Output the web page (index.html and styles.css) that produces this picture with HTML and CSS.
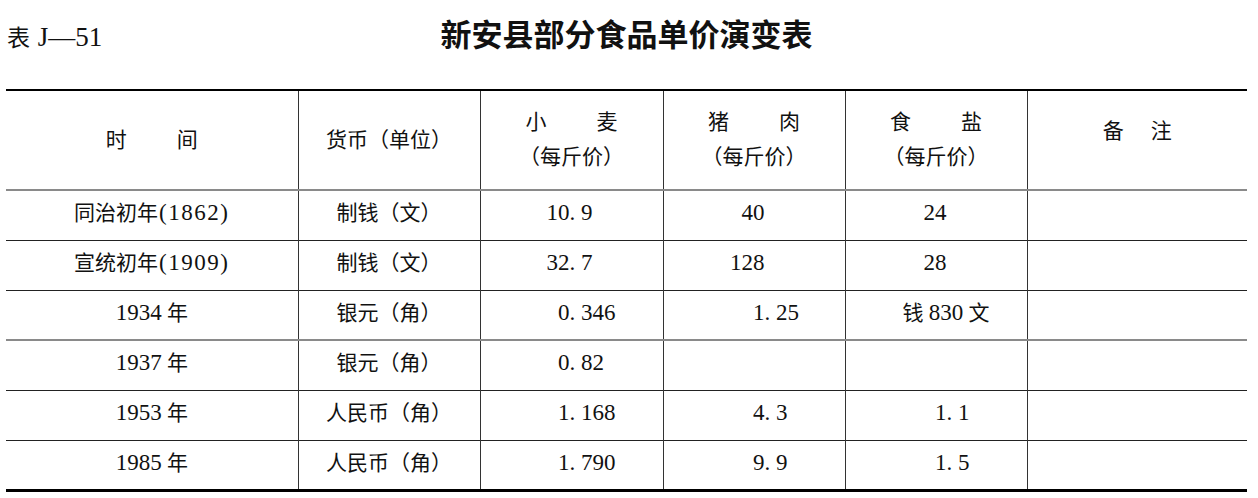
FILE: index.html
```html
<!DOCTYPE html>
<html lang="zh">
<head>
<meta charset="utf-8">
<title>新安县部分食品单价演变表</title>
<link rel="stylesheet" href="styles.css">
</head>
<body>
<div class="page">
  <div class="head">
    <div class="label">表 <span class="lat">J—51</span></div>
    <h1 class="title">新安县部分食品单价演变表</h1>
    <div></div>
  </div>
  <table class="tbl">
    <colgroup>
      <col class="w1"><col class="w2"><col class="w3"><col class="w4"><col class="w5"><col class="w6">
    </colgroup>
    <thead>
      <tr>
        <th><span class="sp50">时间</span></th>
        <th>货币（单位）</th>
        <th><span class="sp50">小麦</span><br>（每斤价）</th>
        <th><span class="sp50">猪肉</span><br>（每斤价）</th>
        <th><span class="sp50">食盐</span><br>（每斤价）</th>
        <th class="note"><span class="sp27">备注</span></th>
      </tr>
    </thead>
    <tbody>
      <tr>
        <td>同治初年<span class="n yr">(1862)</span></td>
        <td>制钱（文）</td>
        <td class="dec d3"><span class="i">10</span>. 9</td>
        <td class="dec d4"><span class="i">40</span></td>
        <td class="dec d5"><span class="i">24</span></td>
        <td></td>
      </tr>
      <tr>
        <td>宣统初年<span class="n yr">(1909)</span></td>
        <td>制钱（文）</td>
        <td class="dec d3"><span class="i">32</span>. 7</td>
        <td class="dec d4"><span class="i">128</span></td>
        <td class="dec d5"><span class="i">28</span></td>
        <td></td>
      </tr>
      <tr class="soft">
        <td><span class="n">1934</span> 年</td>
        <td>银元（角）</td>
        <td class="dec d3"><span class="i">0</span>. 346</td>
        <td class="dec d4"><span class="i">1</span>. 25</td>
        <td class="mix">钱 <span class="n">830</span> 文</td>
        <td></td>
      </tr>
      <tr>
        <td><span class="n">1937</span> 年</td>
        <td>银元（角）</td>
        <td class="dec d3"><span class="i">0</span>. 82</td>
        <td></td>
        <td></td>
        <td></td>
      </tr>
      <tr>
        <td><span class="n">1953</span> 年</td>
        <td>人民币（角）</td>
        <td class="dec d3"><span class="i">1</span>. 168</td>
        <td class="dec d4"><span class="i">4</span>. 3</td>
        <td class="dec d5"><span class="i">1</span>. 1</td>
        <td></td>
      </tr>
      <tr class="last">
        <td><span class="n">1985</span> 年</td>
        <td>人民币（角）</td>
        <td class="dec d3"><span class="i">1</span>. 790</td>
        <td class="dec d4"><span class="i">9</span>. 9</td>
        <td class="dec d5"><span class="i">1</span>. 5</td>
        <td></td>
      </tr>
    </tbody>
  </table>
</div>
</body>
</html>
```

FILE: styles.css
```css
html, body {
  margin: 0;
  padding: 0;
  background: #ffffff;
}

body {
  font-family: "Liberation Serif", "Noto Sans CJK SC", serif;
  color: #111111;
}

.page {
  width: 1241px;
  padding-left: 6px;
}

.head {
  display: grid;
  grid-template-columns: 1fr auto 1fr;
  align-items: baseline;
  padding-top: 17px;
  height: 72px;
}

.label {
  font-size: 23px;
  line-height: 31px;
  padding-left: 1px;
  word-spacing: 2px;
}

.label .lat {
  font-size: 27px;
}

.title {
  margin: 0;
  font-family: "Noto Sans CJK SC", sans-serif;
  font-weight: 700;
  font-size: 31px;
  line-height: 31px;
  color: #111111;
}

.tbl {
  width: 1241px;
  table-layout: fixed;
  border-collapse: collapse;
  border-top: 2px solid #000000;
  border-bottom: 3px solid #000000;
  font-size: 21px;
}

.w1 { width: 292px; }
.w2 { width: 182px; }
.w3 { width: 183px; }
.w4 { width: 182px; }
.w5 { width: 182px; }
.w6 { width: 220px; }

.tbl th,
.tbl td {
  border-left: 1px solid #333333;
  padding: 0;
  text-align: center;
  vertical-align: middle;
  white-space: nowrap;
}

.tbl th:first-child,
.tbl td:first-child {
  border-left: none;
}

.tbl thead tr {
  height: 100px;
  border-bottom: 2px solid #8a8a8a;
}

.tbl th {
  font-weight: 400;
  line-height: 35px;
}

.tbl th.note {
  padding-bottom: 18px;
}

.sp50 {
  letter-spacing: 50px;
  margin-right: -50px;
}

.sp27 {
  letter-spacing: 27px;
  margin-right: -27px;
}

.tbl tbody tr {
  height: 50px;
  border-bottom: 1px solid #222222;
}

.tbl tbody tr.soft {
  border-bottom: 2px solid #8a8a8a;
}

.tbl tbody tr.last {
  border-bottom: 3px solid #000000;
}

.tbl td {
  line-height: 30px;
  padding-bottom: 4px;
}

.n {
  font-size: 23px;
}

.yr {
  letter-spacing: 1.5px;
  padding-left: 1px;
}

.tbl td.dec {
  text-align: left;
  font-size: 23px;
}

.dec .i {
  display: inline-block;
  text-align: right;
}

.d3 .i { width: 89px; }
.d4 .i { width: 101px; }
.d5 .i { width: 101px; }

.tbl td.mix {
  padding-left: 20px;
}
```
